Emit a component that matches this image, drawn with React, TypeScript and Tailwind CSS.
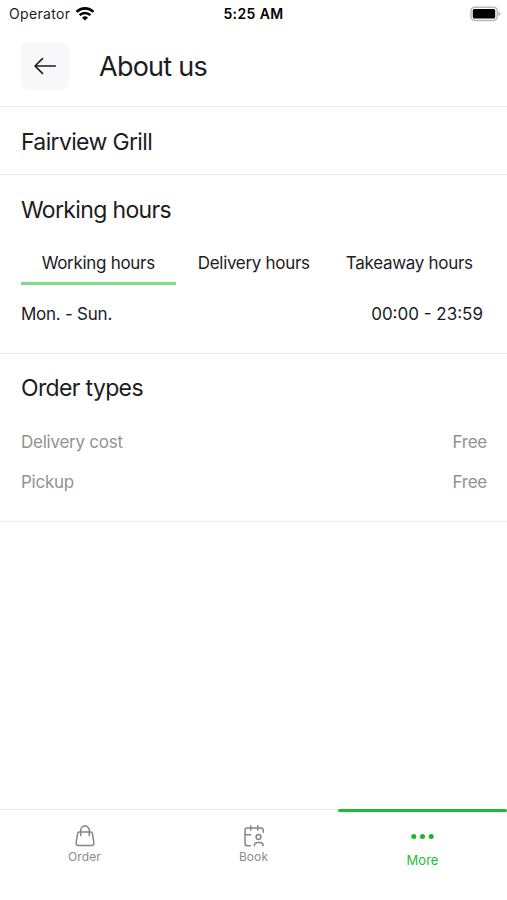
import type { ReactNode } from "react";

const HOURS_TABS = ["Working hours", "Delivery hours", "Takeaway hours"];

const ORDER_TYPES = [
  { label: "Delivery cost", price: "Free" },
  { label: "Pickup", price: "Free" },
];

function WifiIcon() {
  return (
    <svg width="20" height="16" viewBox="0 0 20 16" fill="none" stroke="#000">
      <path d="M1.6 5.9a12 12 0 0 1 16.8 0" strokeWidth="2.7" />
      <path d="M4.6 9.1a7.7 7.7 0 0 1 10.8 0" strokeWidth="2.5" />
      <path d="M10 14.6 7 11.7a4.3 4.3 0 0 1 6 0Z" fill="#000" stroke="none" />
    </svg>
  );
}

function BatteryIcon() {
  return (
    <svg width="31" height="16" viewBox="0 0 31 16" fill="none">
      <rect x="1" y="1.2" width="26.2" height="13.2" rx="3.8" stroke="#b8b8b8" strokeWidth="1.5" />
      <rect x="2.8" y="3" width="22.4" height="9.6" rx="1.5" fill="#000" />
      <path d="M28.4 5.6c1.4.5 2 1.2 2 2.2s-.6 1.8-2 2.3Z" fill="#b8b8b8" />
    </svg>
  );
}

function ArrowIcon() {
  return (
    <svg width="24" height="20" viewBox="0 0 24 20" fill="none" stroke="#1c1c1e" strokeWidth="1.6" strokeLinecap="round" strokeLinejoin="round">
      <path d="M22.3 10H2M9.5 2.6 2 10l7.5 7.4" />
    </svg>
  );
}

function BagIcon() {
  return (
    <svg width="22" height="24" viewBox="0 0 22 24" fill="none" stroke="#858585" strokeWidth="1.5" strokeLinecap="round" strokeLinejoin="round">
      <path d="M5.3 8h11.4q1.5 0 1.7 1.5l1.5 9.300q.3 2.700-2.300 2.700H4.400q-2.600 0-2.300-2.700l1.500-9.300Q3.800 8 5.300 8Z" />
      <path d="M6.700 11.500V6.200a4.300 4.300 0 0 1 8.600 0v5.300" />
    </svg>
  );
}

function BookIcon() {
  return (
    <svg width="22" height="24" viewBox="0 0 22 24" fill="none" stroke="#858585" strokeWidth="1.5" strokeLinecap="round" strokeLinejoin="round">
      <path d="M7.200 21.800H4.200Q2 21.800 2 19.600V6.200Q2 4 4.200 4h14Q20.200 4 20.200 6.200v2" />
      <path d="M7.700 1.700V6M14.700 1.700V6M2 10.800h5.500" />
      <circle cx="15.500" cy="13" r="2.400" />
      <path d="M11.300 21.800v-.3q0-3 3-3h2.700q3 0 3 3v.3" />
    </svg>
  );
}

function DotsIcon() {
  return (
    <svg width="24" height="6" viewBox="0 0 24 6" fill="#17b82f">
      <circle cx="2.8" cy="2.6" r="2.5" />
      <circle cx="11.5" cy="2.6" r="2.5" />
      <circle cx="20.2" cy="2.6" r="2.5" />
    </svg>
  );
}

function SectionTitle({ children }: { children: ReactNode }) {
  return <h2 className="text-[23px] leading-7 tracking-[-0.65px]">{children}</h2>;
}

function NavItem({ icon, label }: { icon: ReactNode; label: string }) {
  return (
    <button className="flex flex-1 flex-col items-center border-t border-[#e8e8e8] pt-[14px] text-[#8c8c8c]">
      {icon}
      <span className="mt-[1px] text-xs leading-4 tracking-[0.1px]">{label}</span>
    </button>
  );
}

export default function App() {
  return (
    <div className="flex h-[900px] w-[507px] flex-col overflow-hidden bg-white font-['Inter',sans-serif] text-[#1c1c1e]">
      <div className="grid h-7 shrink-0 grid-cols-3 items-center text-sm leading-7 text-black">
        <div className="flex items-center gap-[5px] pl-[9px]">
          <span className="tracking-[0.35px] text-[#1c1c1e]">Operator</span>
          <span className="pb-[1px]">
            <WifiIcon />
          </span>
        </div>
        <div className="text-center text-sm font-semibold tracking-[0.4px]">5:25 AM</div>
        <div className="flex justify-end pr-[6px] pb-[1px]">
          <BatteryIcon />
        </div>
      </div>

      <header className="flex h-[79px] shrink-0 items-center border-b border-[#ededed] pl-[21px]">
        <button className="mb-[2px] flex size-12 items-center justify-center rounded-lg bg-[#f8f8fb]" aria-label="Back">
          <ArrowIcon />
        </button>
        <h1 className="ml-[30px] text-[27px] leading-8 tracking-[-0.75px]">About us</h1>
      </header>

      <section className="flex h-[68px] shrink-0 items-center border-b border-[#e8e8e8] px-[21px] pt-[2px]">
        <SectionTitle>Fairview Grill</SectionTitle>
      </section>

      <section className="h-[179px] shrink-0 border-b border-[#e8e8e8] pt-[21px]">
        <div className="px-[21px]">
          <SectionTitle>Working hours</SectionTitle>
        </div>
        <div className="mt-[18px] flex px-[20.5px]">
          {HOURS_TABS.map((tab, i) => (
            <button
              key={tab}
              className={`h-[43px] w-[155.5px] shrink-0 border-b-[3px] pt-[3px] text-[17px] tracking-[-0.3px] ${
                i === 0 ? "border-[#80db8d]" : "border-transparent"
              }`}
            >
              {tab}
            </button>
          ))}
        </div>
        <div className="mt-[17px] flex justify-between pl-[21px] pr-6 text-[17px] leading-6">
          <span className="tracking-[-0.25px]">Mon. - Sun.</span>
          <span>00:00 - 23:59</span>
        </div>
      </section>

      <section className="h-[168px] shrink-0 border-b border-[#ededed] pt-[20px] pr-5 pl-[21px]">
        <SectionTitle>Order types</SectionTitle>
        <dl className="mt-[21px] text-[17px] tracking-[-0.25px] text-[#929292]">
          {ORDER_TYPES.map((type) => (
            <div key={type.label} className="flex h-10 items-center justify-between">
              <dt>{type.label}</dt>
              <dd>{type.price}</dd>
            </div>
          ))}
        </dl>
      </section>

      <nav className="mt-auto flex h-[91px] shrink-0">
        <NavItem icon={<BagIcon />} label="Order" />
        <NavItem icon={<BookIcon />} label="Book" />
        <button className="flex flex-1 flex-col items-center text-[#1cbd35]">
          <span className="h-[3px] w-full rounded-full bg-[#1cbd35]" />
          <span className="mt-[22px] flex">
            <DotsIcon />
          </span>
          <span className="mt-[12px] text-[13px] leading-4">More</span>
        </button>
      </nav>
    </div>
  );
}
